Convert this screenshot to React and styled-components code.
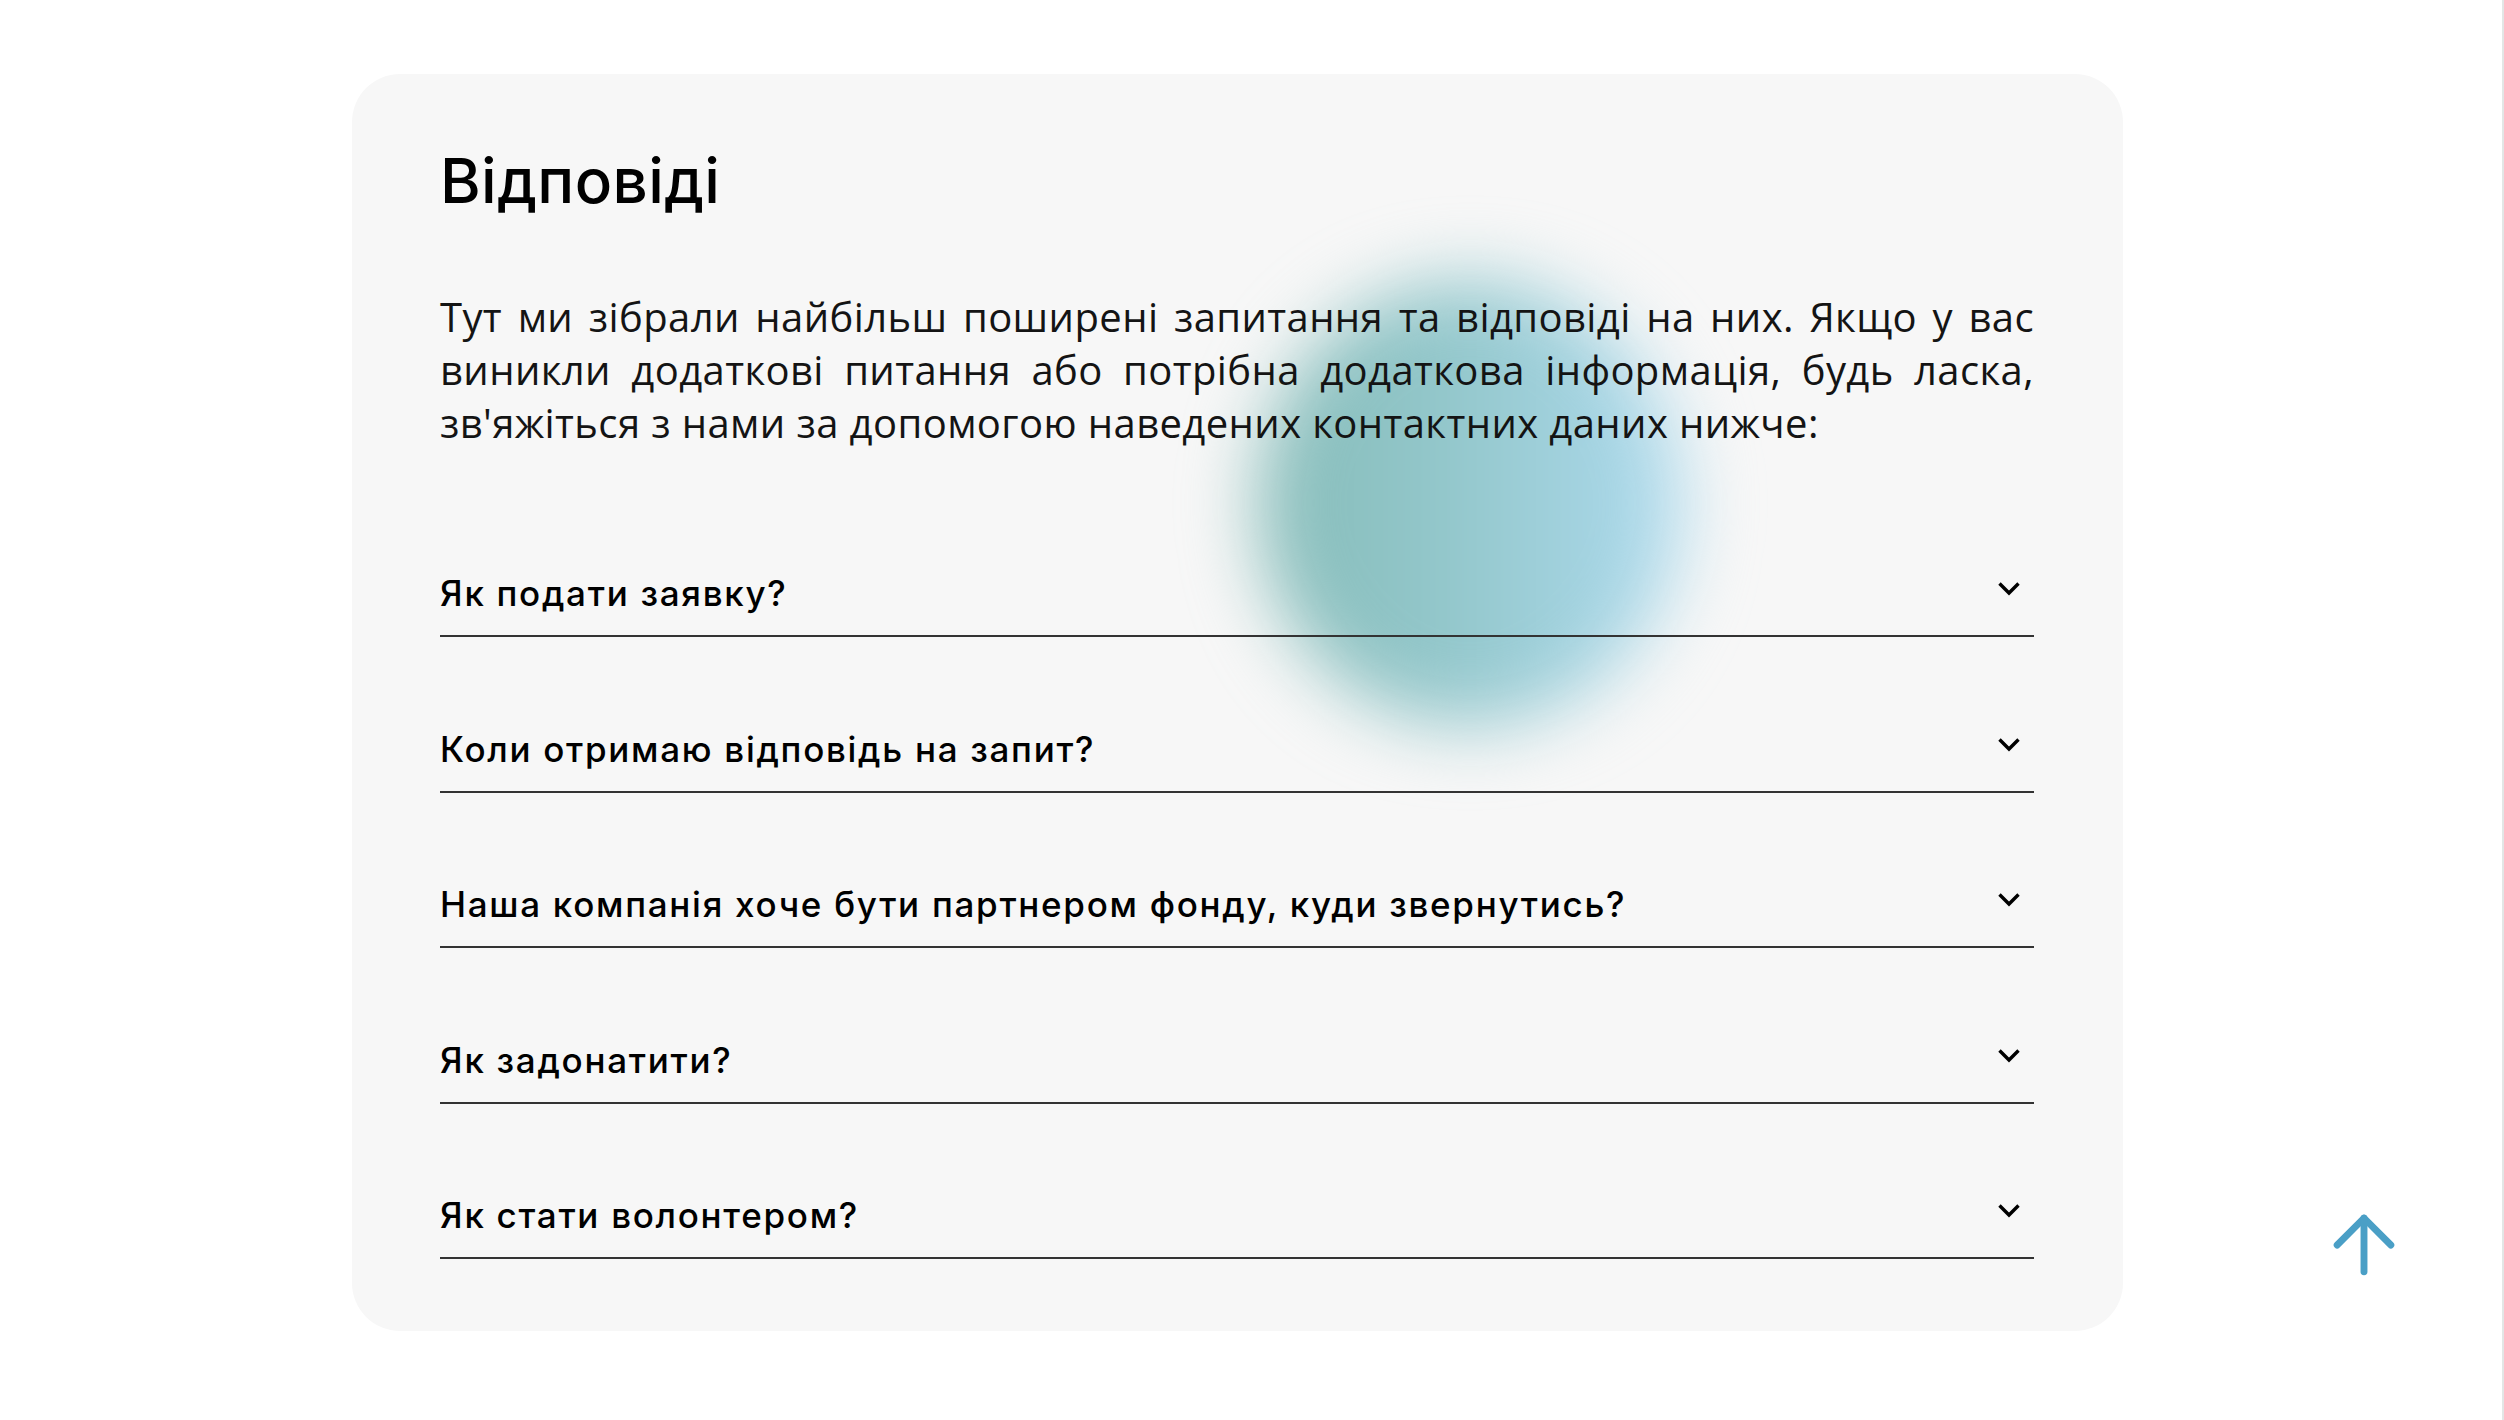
import React from 'react'
import styled, { createGlobalStyle } from 'styled-components'

const GlobalStyle = createGlobalStyle`
    html, body {
        margin: 0;
        padding: 0;
        background: #ffffff;
    }
    * {
        box-sizing: border-box;
    }
`

const Page = styled.main`
    min-height: 100vh;
    padding: 74px 0 80px 352px;
    border-right: 2px solid #e3e6e6;
`

const Card = styled.section`
    position: relative;
    width: 1771px;
    padding: 76px 89px 72px 88px;
    border-radius: 48px;
    background: #f7f7f7;
`

const Blob = styled.div`
    position: absolute;
    left: 906px;
    top: 206px;
    width: 424px;
    height: 446px;
    border-radius: 50%;
    background: linear-gradient(90deg, #86bcb8 0%, #93c7cb 45%, #afdbef 100%);
    filter: blur(36px);
    z-index: 0;
`

const Content = styled.div`
    position: relative;
    z-index: 1;
`

const Title = styled.h2`
    margin: 0;
    font-family: Inter, "Noto Sans", sans-serif;
    font-weight: 500;
    font-size: 62px;
    line-height: 1;
    letter-spacing: 0.4px;
    color: #000;
`

const Intro = styled.p`
    margin: 78px 0 0;
    font-family: "Open Sans", "Noto Sans", sans-serif;
    font-size: 40px;
    line-height: 53px;
    letter-spacing: 0.4px;
    color: #141414;
`

const IntroLine = styled.span`
    display: block;
    text-align: ${ props => props.last ? 'left' : 'justify' };
    text-align-last: ${ props => props.last ? 'left' : 'justify' };
`

const FaqList = styled.div`
    display: flex;
    flex-direction: column;
    gap: 91.5px;
    margin-top: 124px;
`

const FaqItem = styled.div`
    display: flex;
    justify-content: space-between;
    align-items: flex-start;
    padding-bottom: 22px;
    border-bottom: 2px solid #333;
    cursor: pointer;
`

const Question = styled.span`
    font-family: Inter, "Noto Sans", sans-serif;
    font-weight: 500;
    font-size: 35px;
    line-height: 40px;
    letter-spacing: 1.7px;
    color: #000;
`

const Chevron = styled.svg`
    flex: none;
    margin-top: 8px;
    margin-right: 13px;
`

const ToTop = styled.button`
    position: fixed;
    right: 94px;
    bottom: 129px;
    width: 92px;
    height: 92px;
    padding: 0;
    border: 0;
    background: transparent;
    cursor: pointer;
`

const questions = [
    'Як подати заявку?',
    'Коли отримаю відповідь на запит?',
    'Наша компанія хоче бути партнером фонду, куди звернутись?',
    'Як задонатити?',
    'Як стати волонтером?',
]

const App = () => (
    <>
        <GlobalStyle />
        <Page>
            <Card>
                <Blob />
                <Content>
                    <Title>Відповіді</Title>
                    <Intro>
                        <IntroLine>Тут ми зібрали найбільш поширені запитання та відповіді на них. Якщо у вас</IntroLine>
                        <IntroLine>виникли додаткові питання або потрібна додаткова інформація, будь ласка,</IntroLine>
                        <IntroLine last>зв'яжіться з нами за допомогою наведених контактних даних нижче:</IntroLine>
                    </Intro>
                    <FaqList>
                        {
                            questions.map(q => (
                                <FaqItem key={ q }>
                                    <Question>{ q }</Question>
                                    <Chevron width="24" height="15" viewBox="0 0 24 15">
                                        <polyline points="2.5,2.5 12,12 21.5,2.5" fill="none" stroke="#000" strokeWidth="3.4" />
                                    </Chevron>
                                </FaqItem>
                            ))
                        }
                    </FaqList>
                </Content>
            </Card>
        </Page>
        <ToTop aria-label="Нагору">
            <svg width="92" height="92" viewBox="0 0 24 24" fill="none" stroke="#4a9fc6" strokeWidth="1.8" strokeLinecap="round" strokeLinejoin="round">
                <path d="m5 12 7-7 7 7" />
                <path d="M12 19V5" />
            </svg>
        </ToTop>
    </>
)

export default App
